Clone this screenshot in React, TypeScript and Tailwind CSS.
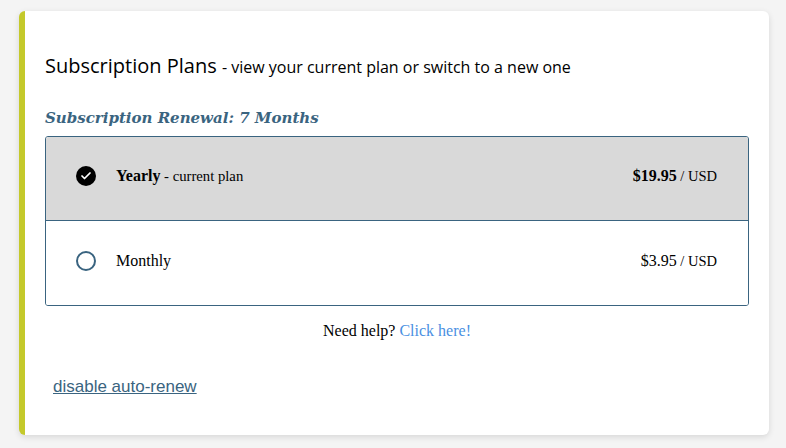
import { Check } from "lucide-react"

type Plan = {
    name: string
    note?: string
    price: string
    current: boolean
}

const plans: Plan[] = [
    { name: "Yearly", note: "current plan", price: "$19.95", current: true },
    { name: "Monthly", price: "$3.95", current: false },
]

function PlanRow({ plan, last }: { plan: Plan; last: boolean }) {
    return (
        <div className={`h-[84px] flex items-center justify-between pl-[30px] pr-[31px] pb-[5px] ${plan.current ? "bg-[#d9d9d9]" : "bg-white"} ${last ? "" : "border-b border-[#3a6480]"}`}>
            <div className="flex items-center">
                {plan.current ? (
                    <span className="w-5 h-5 rounded-full bg-black flex items-center justify-center">
                        <Check className="w-3 h-3 text-white" strokeWidth={3.5} />
                    </span>
                ) : (
                    <span className="w-5 h-5 rounded-full border-2 border-[#3a6480] bg-white" />
                )}
                <span className="ml-[20px] text-[16px] text-black">
                    <span className={plan.current ? "font-bold" : ""}>{plan.name}</span>
                    {plan.note && <span className="text-[14.7px]"> - {plan.note}</span>}
                </span>
            </div>
            <span className="text-[16px] text-black">
                <span className={plan.current ? "font-bold" : ""}>{plan.price}</span>
                <span className="text-[14.5px]"> / USD</span>
            </span>
        </div>
    )
}

export default function App() {
    return (
        <main className="w-[786px] h-[448px] bg-[#f4f4f4] pt-[11px] pl-[19px] pr-[17px] overflow-hidden">
            <section className="h-[424px] bg-white rounded-[6px] border-l-[6px] border-[#c4c92b] shadow-[0_2px_6px_rgba(0,0,0,0.12)] flex flex-col pl-[20px] pr-[20px]">
                <h1 className="mt-[41px] text-[20px] leading-[28px] text-black font-['Open_Sans',sans-serif]">
                    Subscription Plans <span className="text-[16px]">- view your current plan or switch to a new one</span>
                </h1>
                <h2 className="mt-[27px] text-[15px] leading-[20px] font-bold italic text-[#3a6480] font-['DejaVu_Serif',serif]">
                    Subscription Renewal: 7 Months
                </h2>
                <div className="mt-[8px] border border-[#3a6480] rounded-[3px] overflow-hidden font-['Liberation_Serif',serif]">
                    {plans.map((p, i) => (
                        <PlanRow key={p.name} plan={p} last={i === plans.length - 1} />
                    ))}
                </div>
                <p className="mt-[15px] text-center text-[16px] leading-[20px] text-black font-['Liberation_Serif',serif]">
                    Need help? <a className="text-[#4a90e2]" href="#">Click here!</a>
                </p>
                <div className="mt-[33px] pl-[8px]">
                    <a href="#" className="text-[17px] leading-[20px] text-[#3a6480] underline font-['Liberation_Sans',sans-serif]">
                        disable auto-renew
                    </a>
                </div>
            </section>
        </main>
    )
}
